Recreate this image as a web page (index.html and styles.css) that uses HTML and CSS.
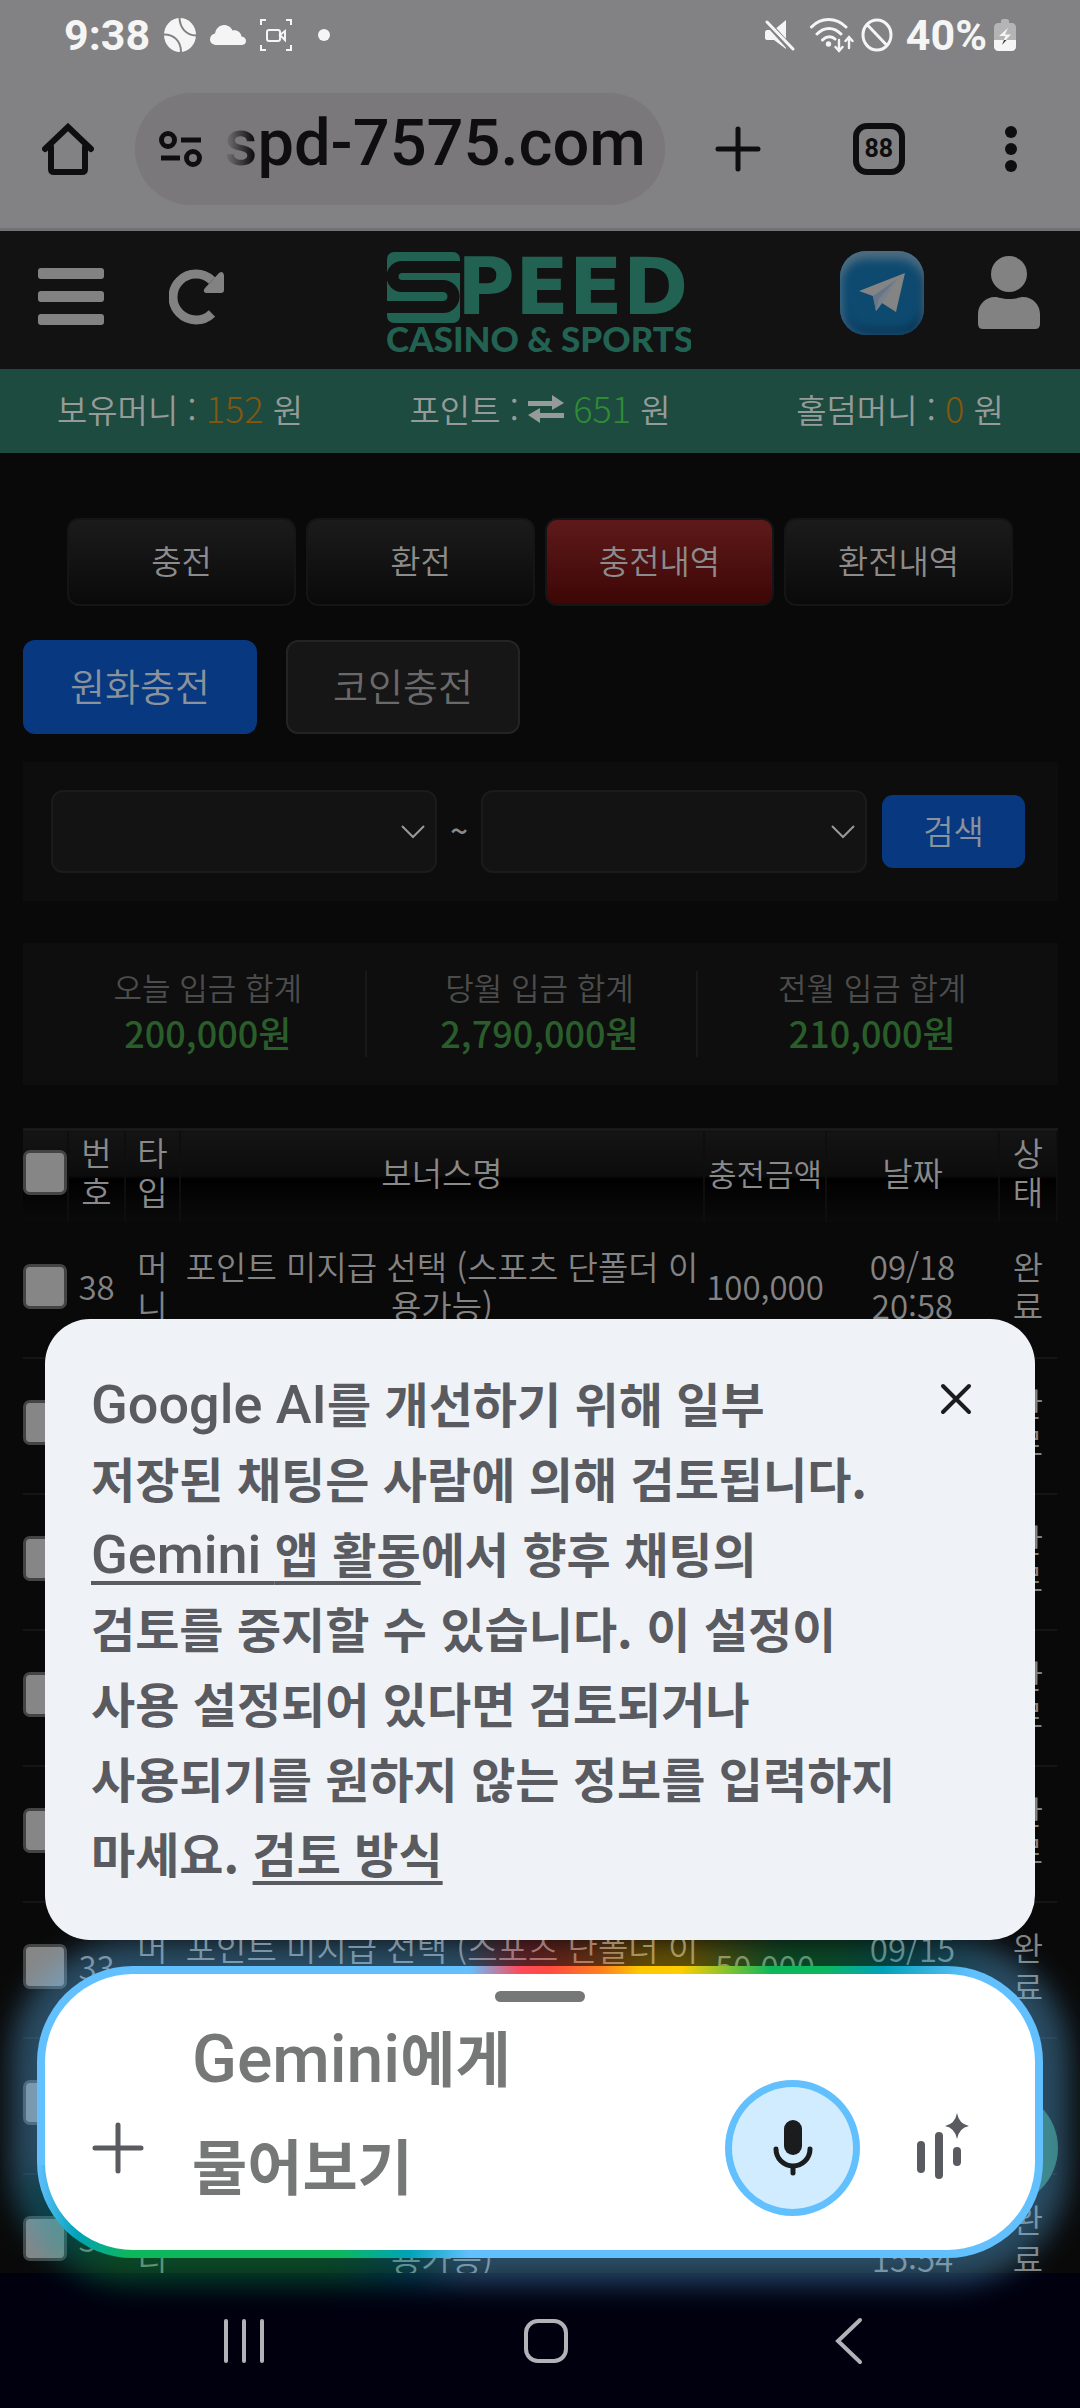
FILE: index.html
```html
<!DOCTYPE html>
<html lang="ko">
<head>
<meta charset="utf-8">
<meta name="viewport" content="width=device-width, initial-scale=1">
<title>충전내역</title>
<link rel="stylesheet" href="styles.css">
</head>
<body>
<div class="screen">
  <div class="status">
    <div class="status-left">
      <span class="clock">9:38</span>
      <svg width="32" height="34" viewBox="0 0 32 34"><ellipse cx="16" cy="17" rx="16" ry="17" fill="#f5f5f5"/><path d="M15.500 0C16 10 22 17 32 17.500M0 16.500C10 16.500 17 23 17 34" fill="none" stroke="#828284" stroke-width="2"/></svg>
      <svg width="36" height="20" viewBox="0 0 36 20"><path d="M7 20C2.500 20 0 17.500 0 14.500C0 11.500 2 9 5 8.500C6 3.500 9.500 0 14 0C18 0 21 2.300 22.500 5.500C27 4.500 31 7.500 31.500 11.500C34.500 12 36 13.800 36 16C36 18.500 34 20 31.500 20Z" fill="#f5f5f5"/></svg>
      <svg width="32" height="32" viewBox="0 0 32 32" fill="none" stroke="#f5f5f5" stroke-width="2"><path d="M1 6V1H6M26 1H31V6M31 26V31H26M6 31H1V26"/><rect x="7" y="11" width="13" height="11" rx="2"/><path d="M20 16L25 12V21Z"/></svg>
      <svg class="dot" width="12" height="12" viewBox="0 0 12 12"><circle cx="6" cy="6" r="6" fill="#f5f5f5"/></svg>
    </div>
    <div class="status-right">
      <svg width="30" height="32" viewBox="0 0 30 32"><path d="M2 11H9L21 1V30L9 21H2C1 21 0 20 0 19V13C0 12 1 11 2 11Z" fill="#f5f5f5"/><path d="M0 1L28 32" stroke="#828284" stroke-width="6"/><path d="M2 3L28 30" stroke="#f5f5f5" stroke-width="3" stroke-linecap="round"/></svg>
      <svg width="44" height="36" viewBox="0 0 44 36" fill="none" stroke="#f5f5f5" stroke-width="3" stroke-linecap="round"><path d="M1.500 10C11 0 26 0 36 10M7 17C14 9.500 24 9.500 31 17M12.500 23C16 19 22 19 25 22"/><circle cx="18.500" cy="27" r="1.200" fill="#f5f5f5"/><path d="M29 23V33M25.500 30L29 34L32.500 30M39 31V21M35.500 24L39 20L42.500 24" stroke-width="2.400"/></svg>
      <svg width="32" height="34" viewBox="0 0 32 34" fill="none" stroke="#f5f5f5" stroke-width="3"><ellipse cx="16" cy="17" rx="14" ry="15"/><path d="M6 6.500L26 27.500"/></svg>
      <span class="clock">40%</span>
      <svg width="22" height="32" viewBox="0 0 22 32"><path d="M7 4V2C7 1 8 0 9 0H13C14 0 15 1 15 2V4H18C20 4 22 6 22 8V21H0V8C0 6 2 4 4 4Z" fill="#b4b4b5"/><path d="M0 21H22V28C22 30 20 32 18 32H4C2 32 0 30 0 28Z" fill="#f5f5f5"/><path d="M8 25L11.500 17H5L14 9L11 15.500H17Z" fill="#f5f5f5"/><path d="M8 26L10 21H12.500Z" fill="#3a3a3c"/></svg>
    </div>
  </div>

  <div class="toolbar">
    <button class="bare" aria-label="홈"><svg width="52" height="52" viewBox="0 0 52 52" fill="none" stroke="#0e0e10" stroke-width="6" stroke-linejoin="round" stroke-linecap="round"><path d="M9 24V46Q9 49 12 49H40Q43 49 43 46V24"/><path d="M3 26L26 4L49 26" stroke-linejoin="miter"/></svg></button>
    <label class="omnibox">
      <svg width="43" height="36" viewBox="0 0 43 36" fill="none" stroke="#0e0e10" stroke-width="5"><circle cx="9" cy="9" r="6.500"/><path d="M22 9H42M2 27H21"/><circle cx="34" cy="27" r="6.500"/></svg>
      <input class="url" type="text" value="spd-7575.com" aria-label="주소">
    </label>
    <div class="toolbar-actions">
      <button class="bare" aria-label="새 탭"><svg width="46" height="46" viewBox="0 0 46 46" stroke="#0e0e10" stroke-width="5" stroke-linecap="round"><path d="M23 3V43M3 23H43"/></svg></button>
      <button class="tab-count" aria-label="탭 88개">88</button>
      <button class="bare more" aria-label="더보기"><svg width="12" height="48" viewBox="0 0 12 48" fill="#0e0e10"><circle cx="6" cy="7" r="6"/><circle cx="6" cy="24" r="6"/><circle cx="6" cy="41" r="6"/></svg></button>
    </div>
  </div>

  <main class="site">
    <header class="site-header">
      <div class="side">
        <button class="bare" aria-label="메뉴"><svg width="66" height="58" viewBox="0 0 66 58" fill="#828282"><rect width="66" height="11" rx="3"/><rect y="23" width="66" height="11" rx="3"/><rect y="46" width="66" height="11" rx="3"/></svg></button>
        <button class="bare" aria-label="새로고침"><svg width="56" height="56" viewBox="0 0 56 56"><path d="M43 44.500A23 23 0 1 1 43 11.500" fill="none" stroke="#828282" stroke-width="9"/><path d="M55 6V21Q55 24 52 24H37Q33 23 36 19L50 4Q54 1 55 6Z" fill="#828282"/></svg></button>
      </div>
      <a class="logo" href="#" aria-label="SPEED CASINO &amp; SPORTS">
        <svg width="304" height="102" viewBox="0 0 304 102"><rect width="73" height="71" rx="7" fill="#226252"/><path d="M74 15H15A9.500 9.500 0 0 0 15 34H56A10 10 0 0 1 56 55H-1" fill="none" stroke="#121212" stroke-width="12"/><text class="logo-main" x="70" y="62">PEED</text><text class="logo-sub" x="-1" y="100">CASINO &amp; SPORTS</text></svg>
      </a>
      <div class="side side-right">
        <a class="telegram" href="#" aria-label="텔레그램"><svg width="46" height="40" viewBox="0 0 46 40"><path d="M0 18L46 0L37 39L23 30L17 38L14 23Z" fill="#848484"/><path d="M14 23L38 6L20 26L17 38Z" fill="#667688"/><path d="M20 26L38 6L23 30L17 38Z" fill="#75818e"/></svg></a>
        <a class="bare" href="#" aria-label="내 정보"><svg width="62" height="74" viewBox="0 0 62 74" fill="#828282"><circle cx="31" cy="18" r="18"/><path d="M17 41C20 41 24 43 31 43C38 43 42 41 45 41C55 41 62 49 62 58V68Q62 73 57 73H5Q0 73 0 68V58C0 49 7 41 17 41Z"/></svg></a>
      </div>
    </header>

    <div class="balances">
      <span>보유머니 : <b class="gold">152</b> 원</span>
      <span>포인트 : <svg width="36" height="28" viewBox="0 0 36 28" fill="#969b99"><path d="M0 6H24V0L36 8L24 15V11H0ZM36 18H12V13L0 20L12 28V23H36Z"/></svg> <b class="lime">651</b> 원</span>
      <span>홀덤머니 : <b class="gold">0</b> 원</span>
    </div>

    <nav class="tabs">
      <a href="#">충전</a><a href="#">환전</a><a class="active" href="#">충전내역</a><a href="#">환전내역</a>
    </nav>

    <div class="body">
      <div class="kinds">
        <button class="kind kind-on">원화충전</button>
        <button class="kind">코인충전</button>
      </div>

      <form class="search">
        <select aria-label="시작일"><option></option></select>
        <span class="tilde">~</span>
        <select aria-label="종료일"><option></option></select>
        <button type="button" class="find">검색</button>
      </form>

      <dl class="sums">
        <div><dt>오늘 입금 합계</dt><dd>200,000원</dd></div>
        <div><dt>당월 입금 합계</dt><dd>2,790,000원</dd></div>
        <div><dt>전월 입금 합계</dt><dd>210,000원</dd></div>
      </dl>

      <table class="history">
        <colgroup><col class="c-check"><col class="c-no"><col class="c-type"><col><col class="c-amount"><col class="c-date"><col class="c-state"></colgroup>
        <thead>
          <tr><th><input type="checkbox" aria-label="전체 선택"></th><th class="narrow">번호</th><th class="narrow">타입</th><th>보너스명</th><th class="amount">충전금액</th><th>날짜</th><th class="narrow">상태</th></tr>
        </thead>
        <tbody>
          <tr><td><input type="checkbox" aria-label="38 선택"></td><td>38</td><td class="narrow">머니</td><td>포인트 미지급 선택 (스포츠 단폴더 이용가능)</td><td>100,000</td><td class="date">09/18 20:58</td><td class="narrow">완료</td></tr>
          <tr><td><input type="checkbox" aria-label="37 선택"></td><td></td><td></td><td></td><td></td><td></td><td class="narrow">완료</td></tr>
          <tr><td><input type="checkbox" aria-label="36 선택"></td><td></td><td></td><td></td><td></td><td></td><td class="narrow">완료</td></tr>
          <tr><td><input type="checkbox" aria-label="35 선택"></td><td></td><td></td><td></td><td></td><td></td><td class="narrow">완료</td></tr>
          <tr><td><input type="checkbox" aria-label="34 선택"></td><td></td><td></td><td></td><td></td><td></td><td class="narrow">완료</td></tr>
          <tr><td><input type="checkbox" aria-label="33 선택"></td><td>33</td><td class="narrow">머니</td><td>포인트 미지급 선택 (스포츠 단폴더 이용가능)</td><td>50,000</td><td class="date top">09/15</td><td class="narrow">완료</td></tr>
          <tr><td><input type="checkbox" aria-label="32 선택"></td><td></td><td></td><td></td><td></td><td></td><td class="narrow">완료</td></tr>
          <tr><td><input type="checkbox" aria-label="31 선택"></td><td>31</td><td class="narrow">머니</td><td>포인트 미지급 선택 (스포츠 단폴더 이용가능)</td><td></td><td class="date">09/15 15:54</td><td class="narrow">완료</td></tr>
        </tbody>
      </table>
    </div>
    <button class="floating" aria-label="상담"></button>
  </main>

  <nav class="system">
    <button class="bare" aria-label="최근 앱"><svg width="44" height="46" viewBox="0 0 44 46" stroke="#b2b2b8" stroke-width="4" stroke-linecap="round"><path d="M4 3V43M22 3V43M40 3V43"/></svg></button>
    <button class="bare" aria-label="홈 화면"><svg width="46" height="46" viewBox="0 0 46 46" fill="none" stroke="#b2b2b8" stroke-width="4"><rect x="3" y="3" width="40" height="40" rx="12"/></svg></button>
    <button class="bare" aria-label="뒤로"><svg width="28" height="48" viewBox="0 0 28 48" fill="none" stroke="#b2b2b8" stroke-width="4" stroke-linecap="round"><path d="M25 3L3 24L25 45"/></svg></button>
  </nav>

  <div class="assistant">
    <section class="notice">
      <p>Google AI<b>를 개선하기 위해 일부<br>저장된 채팅은 사람에 의해 검토됩니다.</b><br><a href="#">Gemini <b>앱 활동</b></a><b>에서 향후 채팅의<br>검토를 중지할 수 있습니다. 이 설정이<br>사용 설정되어 있다면 검토되거나<br>사용되기를 원하지 않는 정보를 입력하지<br>마세요. <a href="#">검토 방식</a></b></p>
      <button class="bare close" aria-label="닫기"><svg width="32" height="32" viewBox="0 0 32 32" stroke="#1b1c1e" stroke-width="4" stroke-linecap="round"><path d="M3 3L29 29M29 3L3 29"/></svg></button>
    </section>
    <section class="sheet">
      <div class="sheet-inner">
        <div class="handle"></div>
        <div class="composer">
          <button class="bare" aria-label="추가"><svg width="52" height="52" viewBox="0 0 52 52" stroke="#595b60" stroke-width="5" stroke-linecap="round"><path d="M26 3V49M3 26H49"/></svg></button>
          <div class="prompt">
            <label for="ask">Gemini<b>에게<br>물어보기</b></label>
            <textarea id="ask"></textarea>
          </div>
          <button class="mic" aria-label="음성 입력"><svg width="40" height="58" viewBox="0 0 40 58"><rect x="11" y="1" width="18" height="35" rx="9" fill="#1b1c1e"/><path d="M3 30A17 17 0 0 0 37 30M20 47V54" fill="none" stroke="#1b1c1e" stroke-width="5" stroke-linecap="round"/></svg></button>
          <button class="bare" aria-label="Live"><svg width="53" height="70" viewBox="0 0 53 70"><path d="M5 32V56M23 23V62M41 38V49" stroke="#595b60" stroke-width="8" stroke-linecap="round"/><path d="M41 0Q43 11 53 13Q43 15 41 26Q39 15 29 13Q39 11 41 0Z" fill="#595b60"/></svg></button>
        </div>
      </div>
    </section>
  </div>
</div>
</body>
</html>
```
FILE: styles.css
```css
* { box-sizing: border-box; }

body {
  margin: 0;
  background: #090909;
  color: #838383;
  font: 350 33px/39px "Noto Sans CJK KR", sans-serif;
}

button, input, select, textarea { font: inherit; color: inherit; margin: 0; padding: 0; }
a { color: inherit; text-decoration: none; }
svg { display: block; flex: none; }
.bare { border: 0; background: none; padding: 0; }

.screen {
  position: relative;
  height: 100vh;
  display: flex;
  flex-direction: column;
  overflow: hidden;
}

/* phone status bar */
.status {
  flex: none;
  display: flex;
  justify-content: space-between;
  align-items: center;
  height: 70px;
  padding: 0 64px;
  background: #828284;
}
.status-left, .status-right { display: flex; align-items: center; gap: 14px; }
.status-right { gap: 7px; }
.status-right svg:first-child { margin-right: 8px; }
.clock { font: 700 43px/44px Roboto, sans-serif; color: #f5f5f5; }
.status-right .clock { margin-left: 6px; }
.dot { margin-left: 12px; }

/* browser toolbar */
.toolbar {
  flex: none;
  display: flex;
  align-items: center;
  height: 161px;
  padding: 0 63px 0 42px;
  background: #828284;
  border-bottom: 3px solid #727274;
}
.omnibox {
  flex: 1;
  display: flex;
  align-items: center;
  gap: 22px;
  min-width: 0;
  height: 112px;
  margin-left: 41px;
  padding: 0 14px 0 24px;
  border-radius: 56px;
  background: #7b787b;
}
.url {
  flex: 1;
  min-width: 0;
  height: 112px;
  padding-bottom: 12px;
  border: 0;
  background: none;
  color: #0e0e10;
  font: 500 65px/96px Roboto, sans-serif;
  -webkit-mask-image: linear-gradient(90deg, transparent, #000 30px);
  mask-image: linear-gradient(90deg, transparent, #000 30px);
}
.toolbar-actions {
  display: flex;
  align-items: center;
  gap: 92px;
  width: 31%;
  margin-left: 50px;
}
.more { margin-left: auto; }
.tab-count {
  width: 52px;
  height: 52px;
  border: 6px solid #0e0e10;
  border-radius: 14px;
  background: none;
  color: #0e0e10;
  font: 700 25px/40px Roboto, sans-serif;
}

/* site header */
.site { position: relative; flex: 1; min-height: 0; overflow: hidden; }
.site-header {
  display: grid;
  grid-template-columns: 1fr auto 1fr;
  align-items: center;
  height: 138px;
  padding: 0 40px 0 38px;
  background: #121212;
}
.side { display: flex; align-items: center; gap: 65px; padding-bottom: 6px; }
.side-right { justify-content: flex-end; gap: 54px; padding-bottom: 14px; }
.logo { padding-top: 6px; }
.logo-main { font: 700 79px "DejaVu Sans", sans-serif; fill: #226252; }
.logo-sub { font: 900 35px Lato, sans-serif; fill: #226252; }
.telegram {
  display: grid;
  place-items: center;
  width: 84px;
  height: 84px;
  border-radius: 26px;
  background: #0e4a70;
  box-shadow: inset 0 8px 10px #4f6d80, inset 4px 0 8px #215a80, inset 0 -5px 10px #0a2d48;
}

.balances {
  display: grid;
  grid-template-columns: repeat(3, 1fr);
  align-items: center;
  height: 84px;
  padding-bottom: 4px;
  background: #1e4b40;
  color: #969b99;
  text-align: center;
}
.balances svg { display: inline-block; }
.balances b { font-size: 36px; font-weight: 300; line-height: 1px; }
.gold { color: #84570f; }
.lime { color: #2f8c35; }

.tabs {
  display: grid;
  grid-template-columns: repeat(4, 1fr);
  gap: 10px;
  padding: 65px 67px 0;
}
.tabs a {
  display: grid;
  place-items: center;
  height: 88px;
  padding-bottom: 3px;
  border: 2px solid #161414;
  border-radius: 12px;
  background: linear-gradient(#1b1b1b, #0a0a0a);
  color: #8c8c8c;
}
.tabs .active { background: linear-gradient(#5e1a1a, #3e0606); }

.body { padding: 34px 22px 0 23px; }
.kinds { display: flex; gap: 29px; }
.kind {
  width: 234px;
  height: 94px;
  padding-bottom: 6px;
  border: 2px solid #242424;
  border-radius: 12px;
  background: #161616;
  color: #6a6a6a;
  font-size: 38px;
}
.kind-on { border-color: #083880; background: #083880; color: #8a929c; }

.search {
  display: flex;
  align-items: center;
  margin: 28px 0 42px;
  padding: 28px 33px 28px 28px;
  background: #0d0d0d;
}
.search select {
  flex: 1;
  min-width: 0;
  height: 83px;
  appearance: none;
  border: 2px solid #1b1b1b;
  border-radius: 12px;
  background: #131313 url("data:image/svg+xml,%3Csvg xmlns='http://www.w3.org/2000/svg' width='24' height='14' fill='none' stroke='%23999' stroke-width='2'%3E%3Cpath d='M1 1L12 12L23 1'/%3E%3C/svg%3E") no-repeat right 10px center;
}
.tilde { width: 44px; padding-bottom: 4px; text-align: center; font-size: 31px; font-weight: 500; color: #8a8a8a; }
.find {
  width: 143px;
  height: 73px;
  margin-left: 15px;
  padding-bottom: 3px;
  border: 0;
  border-radius: 11px;
  background: #083880;
  color: #8a929c;
}

.sums {
  display: grid;
  grid-template-columns: repeat(3, 1fr);
  gap: 16px;
  margin: 0 0 43px;
  padding: 28px;
  background: #0e0e0e;
  text-align: center;
}
.sums div:not(:last-child) { border-right: 2px solid #191919; }
.sums dt { font-size: 31px; line-height: 31px; color: #4c4c4c; }
.sums dd { margin: 0; padding-top: 5px; font-size: 36px; font-weight: 500; line-height: 50px; color: #295e2b; }

.history { width: 100%; table-layout: fixed; border-collapse: collapse; text-align: center; }
.c-check { width: 45px; }
.c-no { width: 57px; }
.c-type { width: 55px; }
.c-amount { width: 122px; }
.c-date { width: 173px; }
.c-state { width: 58px; }
.history th {
  height: 92px;
  padding: 0 0 8px;
  font-weight: 350;
  color: #8a8a8a;
  background: linear-gradient(#141414, #0c0c0c 49%, #000 52%, #0b0b0b);
  border-top: 3px solid #191919;
  border-right: 2px solid #0e0e0e;
}
.history .amount { font-size: 31px; white-space: nowrap; }
.history td { height: 136px; padding: 0 0 6px; border-bottom: 2px solid #151515; }
.history .narrow { padding-left: 8px; padding-right: 8px; }
.history .date { padding-left: 20px; padding-right: 20px; }
.history .top { vertical-align: top; padding-top: 26px; }
.history input {
  display: block;
  appearance: none;
  width: 44px;
  height: 45px;
  border: 3px solid #444;
  border-radius: 7px;
  background: #868686;
}

.floating {
  position: absolute;
  right: 22px;
  bottom: 67px;
  width: 116px;
  height: 116px;
  border: 0;
  border-radius: 50%;
  background: #2c6b55;
}

.system {
  flex: none;
  display: grid;
  grid-template-columns: repeat(3, 1fr);
  place-items: center;
  height: 135px;
  padding: 0 80px 0 93px;
  background: #00000f;
}

/* assistant overlay */
.assistant {
  position: absolute;
  left: 0;
  right: 0;
  bottom: 150px;
  display: flex;
  flex-direction: column;
  gap: 26px;
}
.notice {
  position: relative;
  z-index: 1;
  display: flex;
  justify-content: space-between;
  align-items: flex-start;
  margin: 0 45px;
  padding: 48px 63px 48px 46px;
  border-radius: 45px;
  background: #eff3f8;
  color: #595b60;
}
.notice p { margin: 0; font: 500 54px/75px Roboto, "Noto Sans CJK KR", sans-serif; }
.notice b { font: 700 48px/1px "Noto Sans CJK KR", sans-serif; }
.notice a { text-decoration: underline; text-decoration-thickness: 4px; text-underline-offset: 8px; }
.close { margin-top: 16px; }

.sheet {
  position: relative;
  margin: 0 37px;
  padding: 8px;
  --ring: linear-gradient(90deg, #62c0ff, #00a3b8 4%, #0db85c 9%, #0db85c 30%, #00a3b8 37%, #62c0ff 43%) left bottom / 100% 32% no-repeat,
    linear-gradient(90deg, #62c0ff 43%, #ff4a5c 48%, #ff4c40 51%, #ff8020 56%, #ffc800 60%, #ffcd00 64%, #0db85c 73%, #0db85c 78%, #00a3b8 84%, #62c0ff 93%) left top / 100% 32% no-repeat,
    #62c0ff;
}
.sheet::before, .sheet::after {
  content: "";
  position: absolute;
  inset: 0;
  border-radius: 96px;
  background: var(--ring);
}
.sheet::before { inset: -26px; border-radius: 120px; opacity: 0.36; filter: blur(14px); }
.sheet-inner {
  position: relative;
  z-index: 1;
  padding: 17px 0 28px;
  border-radius: 88px;
  background: #fff;
}
.handle { width: 90px; height: 11px; margin: 0 auto; border-radius: 6px; background: #767877; }
.composer { display: flex; align-items: flex-end; gap: 56px; padding: 4px 66px 0 47px; }
.composer button { margin-bottom: 6px; }
.composer > .bare { height: 136px; display: flex; align-items: center; }
.prompt { display: grid; flex: 1; margin-left: -8px; }
.prompt > * { grid-area: 1 / 1; }
.prompt label { font: 500 66px/108px Roboto, sans-serif; color: #767877; }
.prompt b { font: 700 60px/1px "Noto Sans CJK KR", sans-serif; }
.prompt textarea { border: 0; outline: 0; background: none; resize: none; }
.mic {
  display: grid;
  place-items: center;
  width: 135px;
  height: 136px;
  border: 7px solid #62c0ff;
  border-radius: 50%;
  background: #d2ecff;
}
```
